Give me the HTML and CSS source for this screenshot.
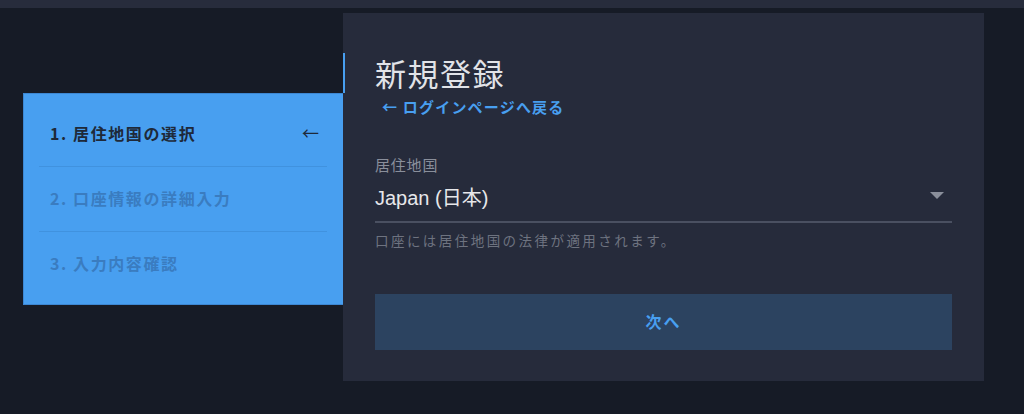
FILE: index.html
```html
<!DOCTYPE html>
<html lang="ja">
<head>
<meta charset="utf-8">
<title>新規登録</title>
<link rel="stylesheet" href="styles.css">
</head>
<body>
<div class="topbar"></div>
<div class="stage">
  <nav class="steps">
    <div class="step active"><span>1. 居住地国の選択</span><span class="arrow">←</span></div>
    <div class="step"><span>2. 口座情報の詳細入力</span></div>
    <div class="step"><span>3. 入力内容確認</span></div>
  </nav>
  <main class="card">
    <h1 class="title">新規登録</h1>
    <a class="back" href="#">← ログインページへ戻る</a>
    <div class="field">
      <div class="label">居住地国</div>
      <div class="select">
        <span class="value">Japan (日本)</span>
        <span class="caret"></span>
      </div>
      <div class="help">口座には居住地国の法律が適用されます。</div>
    </div>
    <button class="next" type="button">次へ</button>
  </main>
</div>
</body>
</html>
```

FILE: styles.css
```css
* { box-sizing: border-box; }
html, body {
  margin: 0;
  padding: 0;
  background: #161b26;
  font-family: "Liberation Sans", "Noto Sans CJK JP", sans-serif;
  width: 1024px;
  height: 414px;
  overflow: hidden;
}
.topbar {
  height: 8px;
  background: #272c3c;
}
.stage {
  display: flex;
  align-items: flex-start;
  padding: 5px 0 0 23px;
}
.steps {
  width: 320px;
  margin-top: 80px;
  background: #489ff0;
  border: 1px solid #3d87d2;
  border-right: none;
  padding: 6px 0;
}
.step {
  display: flex;
  align-items: center;
  justify-content: space-between;
  height: 65px;
  margin: 0 16px 0 15px;
  padding: 0 8px 3px 11px;
  font-family: "Noto Sans CJK JP", sans-serif;
  font-size: 16px;
  font-weight: 700;
  letter-spacing: 1.6px;
  color: #3a7cc0;
}
.step.active {
  height: 66px;
  padding-bottom: 1px;
  color: #1e2939;
}
.step + .step {
  border-top: 1px solid #4092df;
}
.step:last-child {
  height: 67px;
  padding-bottom: 5px;
}
.arrow {
  font-size: 17px;
  font-weight: 400;
  letter-spacing: 0;
  color: #1e2939;
}
.card {
  position: relative;
  width: 641px;
  height: 368px;
  background: #262b3b;
  padding: 40px 32px 0 32px;
}
.card::before {
  content: "";
  position: absolute;
  left: 0;
  top: 40px;
  width: 2px;
  height: 40px;
  background: #489ff0;
}
.title {
  margin: 0;
  font-family: "Noto Sans CJK JP", sans-serif;
  font-size: 31px;
  font-weight: 400;
  line-height: 40px;
  letter-spacing: 1.5px;
  color: #e1e3e8;
}
.back {
  display: block;
  margin: 4px 0 0 7px;
  font-family: "Noto Sans CJK JP", sans-serif;
  font-size: 15px;
  font-weight: 700;
  line-height: 20px;
  letter-spacing: 1.2px;
  color: #489ff0;
  text-decoration: none;
}
.field {
  margin-top: 38px;
}
.label {
  font-family: "Noto Sans CJK JP", sans-serif;
  font-size: 15px;
  line-height: 20px;
  letter-spacing: 0.8px;
  color: #8a8f9b;
}
.select {
  display: flex;
  align-items: center;
  justify-content: space-between;
  height: 48px;
  border-bottom: 2px solid #4a5061;
  padding: 0 8px 4px 0;
}
.value {
  font-size: 20px;
  color: #e6e7ea;
}
.caret {
  width: 0;
  height: 0;
  border-left: 7px solid transparent;
  border-right: 7px solid transparent;
  border-top: 7px solid #8a8f9b;
  margin-top: -2px;
}
.help {
  margin-top: 7px;
  font-family: "Noto Sans CJK JP", sans-serif;
  font-size: 13.5px;
  line-height: 20px;
  letter-spacing: 2.45px;
  color: #6e7380;
}
.next {
  display: block;
  width: 577px;
  height: 56px;
  margin-top: 44px;
  border: none;
  background: #2c4360;
  font-family: "Noto Sans CJK JP", sans-serif;
  font-size: 16px;
  font-weight: 700;
  letter-spacing: 2px;
  color: #489ff0;
  padding: 0 0 3px 0;
}
```
